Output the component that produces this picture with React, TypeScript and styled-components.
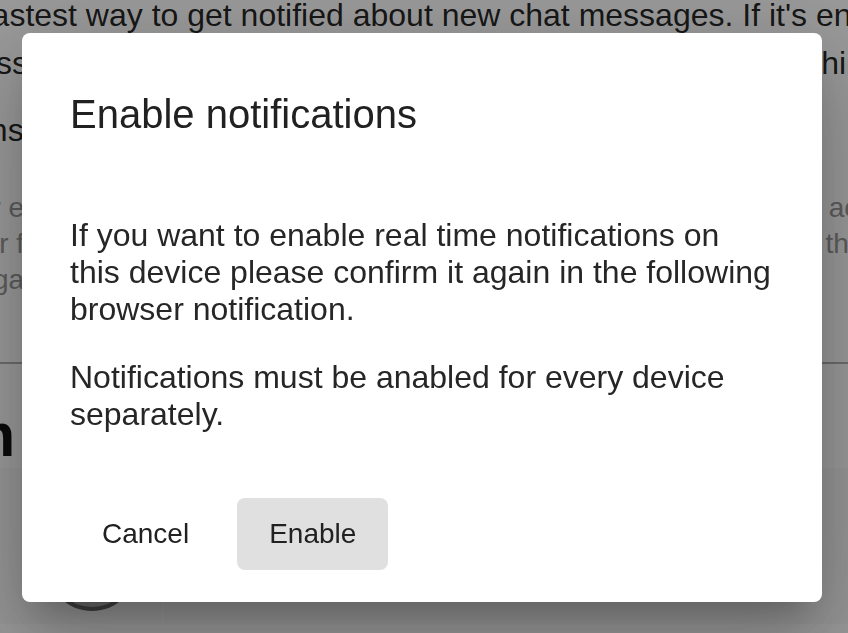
import React from 'react';
import styled, { createGlobalStyle, css } from 'styled-components';

const GlobalStyle = createGlobalStyle`
  html,
  body {
    margin: 0;
    padding: 0;
    background: #fff;
    overflow: hidden;
  }

  body {
    font-family: "Liberation Sans", Arial, sans-serif;
  }
`;

// the settings page sits behind the dialog, scrolled a little to the right
const scrolled = css`
  margin-left: -309px;
  white-space: nowrap;
`;

const Page = styled.main`
  display: flex;
  flex-direction: column;
  height: 100vh;
  margin-top: -9px;
  overflow: hidden;
`;

const Intro = styled.div`
  ${scrolled};
  font-size: 32px;
  line-height: 48px;
  color: rgba(0, 0, 0, 0.87);
`;

const SettingTitle = styled.div`
  ${scrolled};
  margin-top: 19px;
  font-size: 32px;
  line-height: 48px;
  color: rgba(0, 0, 0, 0.87);
`;

const SettingHint = styled.div`
  ${scrolled};
  margin-top: 36px;
  font-size: 28px;
  line-height: 36px;
  color: #999;
`;

const Divider = styled.hr`
  margin: 64px 0 0;
  border: 0;
  height: 2px;
  background: #b3b3b3;
`;

const SectionTitle = styled.h3`
  ${scrolled};
  margin-top: 38px;
  margin-bottom: 0;
  font-size: 61px;
  line-height: 66px;
  font-weight: 700;
  color: #111;
`;

const Split = styled.div`
  display: flex;
  flex: 1;
`;

const Sidebar = styled.aside`
  width: 162px;
  padding-top: 53px;
  border-right: 2px solid #fff;
  background: #fafafa;
`;

const Avatar = styled.div`
  width: 82px;
  height: 82px;
  margin-left: 47px;
  border-radius: 50%;
  border: 4px solid #6a6a6a;
  background: radial-gradient(circle at 50% 40%, #d6d6d6, #a8a8a8);
`;

const Main = styled.section`
  flex: 1;
  background: #fafafa;
`;

const Backdrop = styled.div`
  position: fixed;
  inset: 0;
  display: flex;
  align-items: center;
  justify-content: center;
  padding: 2px 4px 0 0;
  background: rgba(0, 0, 0, 0.4);
`;

const Dialog = styled.div`
  display: flex;
  flex-direction: column;
  width: 800px;
  box-sizing: border-box;
  padding: 58px 48px 32px;
  border-radius: 8px;
  background: #fff;
  box-shadow:
    0 22px 30px -14px rgba(0, 0, 0, 0.2),
    0 48px 76px 6px rgba(0, 0, 0, 0.14),
    0 18px 92px 16px rgba(0, 0, 0, 0.12);
`;

const DialogTitle = styled.h2`
  margin: 0;
  font-size: 40px;
  line-height: 46px;
  font-weight: 400;
  color: #212121;
`;

const DialogContent = styled.div`
  display: flex;
  flex-direction: column;
  gap: 32px;
  margin-top: 80px;
`;

const DialogText = styled.p`
  margin: 0;
  font-size: 32px;
  line-height: 36.8px;
  color: #262626;
`;

const DialogActions = styled.div`
  display: flex;
  gap: 16px;
  margin-top: 65px;
`;

const ActionButton = styled.button<{ $primary?: boolean }>`
  height: 72px;
  padding: 0 32px;
  border: 0;
  border-radius: 8px;
  font-family: inherit;
  font-size: 28px;
  color: #212121;
  background: ${(p) => (p.$primary ? '#e0e0e0' : 'transparent')};
  cursor: pointer;
`;

export default function App() {
  return (
    <>
      <GlobalStyle />

      <Page>
        <Intro>
          Notifications are the fastest way to get notified about new chat messages. If it's enabled,
          <br />
          you'll receive new messages even if this tab is closed. They'll normally arrive within seconds.
        </Intro>

        <SettingTitle>Allow push notifications</SettingTitle>

        <SettingHint>
          Get a sound and alert for every new message that arrives in any chat or team of your entire account.
          <br />
          Sounds use your browser for this site and the operating system, exactly like alarms from all the other apps.
          <br />
          You may turn alerts off again at any time in the settings of this page.
        </SettingHint>

        <Divider />

        <SectionTitle>Team room</SectionTitle>

        <Split>
          <Sidebar>
            <Avatar />
          </Sidebar>
          <Main />
        </Split>
      </Page>

      <Backdrop>
        <Dialog role="dialog" aria-labelledby="notify-title">
          <DialogTitle id="notify-title">Enable notifications</DialogTitle>

          <DialogContent>
            <DialogText>
              If you want to enable real time notifications on this device please confirm it again
              in the following browser notification.
            </DialogText>
            <DialogText>Notifications must be anabled for every device separately.</DialogText>
          </DialogContent>

          <DialogActions>
            <ActionButton>Cancel</ActionButton>
            <ActionButton $primary>Enable</ActionButton>
          </DialogActions>
        </Dialog>
      </Backdrop>
    </>
  );
}
